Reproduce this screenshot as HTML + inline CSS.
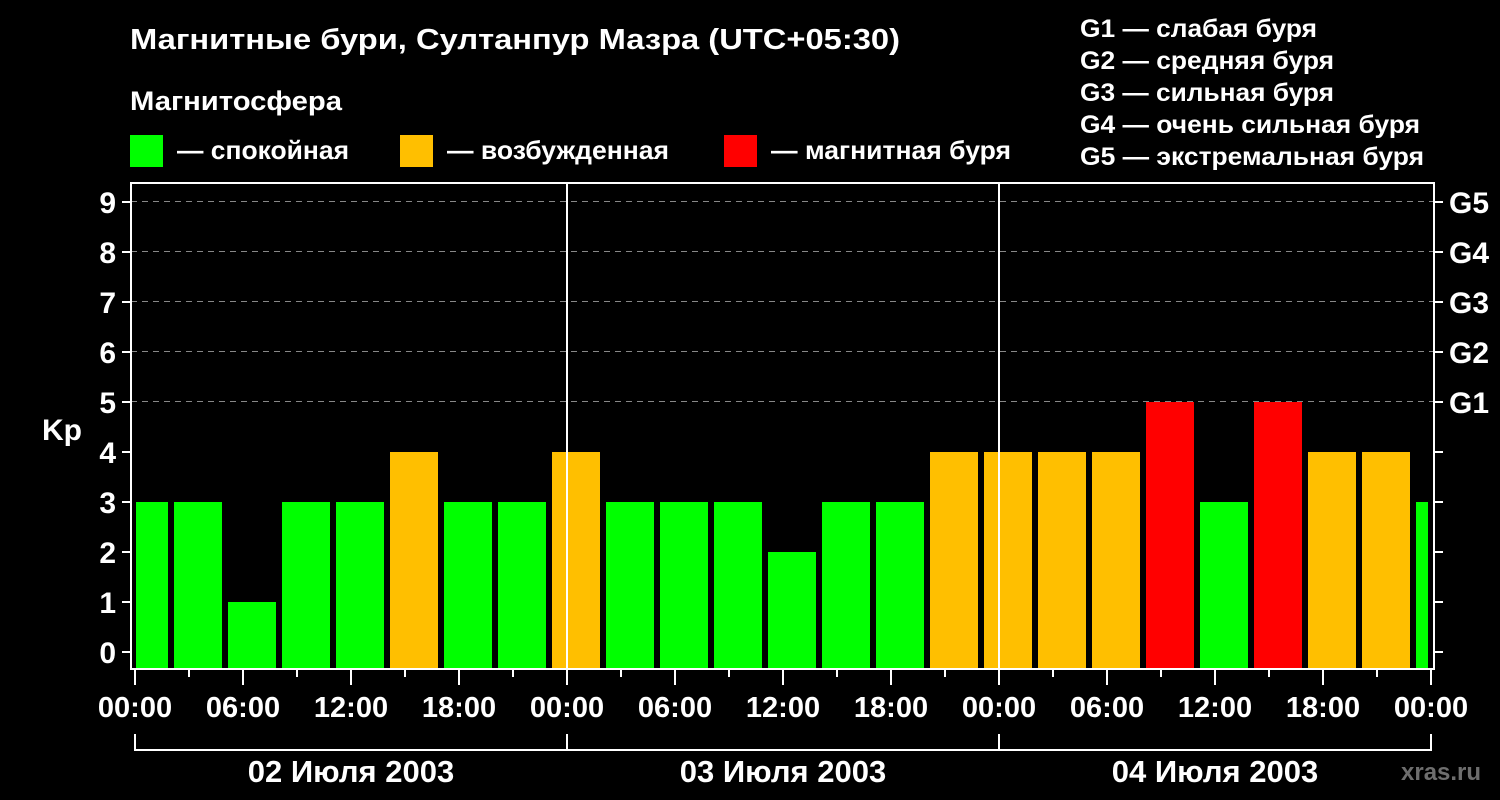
<!DOCTYPE html>
<html><head><meta charset="utf-8"><style>
html,body{margin:0;padding:0;background:#000;}
svg{display:block;}
text{font-family:"Liberation Sans",Arial,sans-serif;font-weight:bold;fill:#fff;}
</style></head><body>
<svg width="1500" height="800" viewBox="0 0 1500 800" xmlns="http://www.w3.org/2000/svg">
<rect width="1500" height="800" fill="#000"/>
<text x="130" y="49" font-size="29" textLength="770" lengthAdjust="spacingAndGlyphs">Магнитные бури, Султанпур Мазра (UTC+05:30)</text>
<text x="130" y="110" font-size="27" textLength="212" lengthAdjust="spacingAndGlyphs">Магнитосфера</text>
<rect x="130" y="135" width="33" height="32" fill="#00ff00"/>
<text x="177" y="159" font-size="26" textLength="172" lengthAdjust="spacingAndGlyphs">— спокойная</text>
<rect x="400" y="135" width="33" height="32" fill="#ffbf00"/>
<text x="447" y="159" font-size="26" textLength="222" lengthAdjust="spacingAndGlyphs">— возбужденная</text>
<rect x="724" y="135" width="33" height="32" fill="#ff0000"/>
<text x="771" y="159" font-size="26" textLength="240" lengthAdjust="spacingAndGlyphs">— магнитная буря</text>
<g font-size="25">
<text x="1080" y="37" textLength="237" lengthAdjust="spacingAndGlyphs">G1 — слабая буря</text>
<text x="1080" y="69" textLength="254" lengthAdjust="spacingAndGlyphs">G2 — средняя буря</text>
<text x="1080" y="101" textLength="254" lengthAdjust="spacingAndGlyphs">G3 — сильная буря</text>
<text x="1080" y="133" textLength="340" lengthAdjust="spacingAndGlyphs">G4 — очень сильная буря</text>
<text x="1080" y="165" textLength="344" lengthAdjust="spacingAndGlyphs">G5 — экстремальная буря</text>
</g>
<g stroke="#888" stroke-width="1" stroke-dasharray="6,5">
<line x1="131" y1="201.5" x2="1433" y2="201.5"/>
<line x1="131" y1="251.5" x2="1433" y2="251.5"/>
<line x1="131" y1="301.5" x2="1433" y2="301.5"/>
<line x1="131" y1="351.5" x2="1433" y2="351.5"/>
<line x1="131" y1="401.5" x2="1433" y2="401.5"/>
</g>
<g fill="#00ff00">
<rect x="136" y="502" width="32" height="166"/>
<rect x="174" y="502" width="48" height="166"/>
<rect x="228" y="602" width="48" height="66"/>
<rect x="282" y="502" width="48" height="166"/>
<rect x="336" y="502" width="48" height="166"/>
<rect x="444" y="502" width="48" height="166"/>
<rect x="498" y="502" width="48" height="166"/>
<rect x="606" y="502" width="48" height="166"/>
<rect x="660" y="502" width="48" height="166"/>
<rect x="714" y="502" width="48" height="166"/>
<rect x="768" y="552" width="48" height="116"/>
<rect x="822" y="502" width="48" height="166"/>
<rect x="876" y="502" width="48" height="166"/>
<rect x="1200" y="502" width="48" height="166"/>
<rect x="1416" y="502" width="12" height="166"/>
</g>
<g fill="#ffbf00">
<rect x="390" y="452" width="48" height="216"/>
<rect x="552" y="452" width="48" height="216"/>
<rect x="930" y="452" width="48" height="216"/>
<rect x="984" y="452" width="48" height="216"/>
<rect x="1038" y="452" width="48" height="216"/>
<rect x="1092" y="452" width="48" height="216"/>
<rect x="1308" y="452" width="48" height="216"/>
<rect x="1362" y="452" width="48" height="216"/>
</g>
<g fill="#ff0000">
<rect x="1146" y="402" width="48" height="266"/>
<rect x="1254" y="402" width="48" height="266"/>
</g>
<g stroke="#fff" stroke-width="2" fill="none">
<path d="M131 183 H1434 V669 H131 Z"/>
<line x1="567" y1="183" x2="567" y2="669"/>
<line x1="999" y1="183" x2="999" y2="669"/>
<path d="M122 202H131M122 252H131M122 302H131M122 352H131M122 402H131M122 452H131M122 502H131M122 552H131M122 602H131M122 652H131"/>
<path d="M1434 202H1443M1434 252H1443M1434 302H1443M1434 352H1443M1434 402H1443M1434 452H1443M1434 502H1443M1434 552H1443M1434 602H1443M1434 652H1443"/>
<path d="M135 669V685M189 669V677M243 669V685M297 669V677M351 669V685M405 669V677M459 669V685M513 669V677M567 669V685M621 669V677M675 669V685M729 669V677M783 669V685M837 669V677M891 669V685M945 669V677M999 669V685M1053 669V677M1107 669V685M1161 669V677M1215 669V685M1269 669V677M1323 669V685M1377 669V677M1431 669V685"/>
<path d="M135 734V750H1431V734M567 734V750M999 734V750"/>
</g>
<g font-size="30" text-anchor="end">
<text x="116" y="213">9</text><text x="116" y="263">8</text><text x="116" y="313">7</text>
<text x="116" y="363">6</text><text x="116" y="413">5</text><text x="116" y="463">4</text>
<text x="116" y="513">3</text><text x="116" y="563">2</text><text x="116" y="613">1</text>
<text x="116" y="663">0</text>
</g>
<g font-size="30">
<text x="1449" y="213">G5</text><text x="1449" y="263">G4</text><text x="1449" y="313">G3</text>
<text x="1449" y="363">G2</text><text x="1449" y="413">G1</text>
</g>
<text x="42" y="440" font-size="30">Kp</text>
<g font-size="29" text-anchor="middle">
<text x="135" y="717">00:00</text><text x="243" y="717">06:00</text><text x="351" y="717">12:00</text>
<text x="459" y="717">18:00</text><text x="567" y="717">00:00</text><text x="675" y="717">06:00</text>
<text x="783" y="717">12:00</text><text x="891" y="717">18:00</text><text x="999" y="717">00:00</text>
<text x="1107" y="717">06:00</text><text x="1215" y="717">12:00</text><text x="1323" y="717">18:00</text>
<text x="1431" y="717">00:00</text>
</g>
<g font-size="31" text-anchor="middle">
<text x="351" y="782">02 Июля 2003</text>
<text x="783" y="782">03 Июля 2003</text>
<text x="1215" y="782">04 Июля 2003</text>
</g>
<text x="1401" y="780" font-size="24" style="fill:#6e6e6e">xras.ru</text>
</svg>
</body></html>
